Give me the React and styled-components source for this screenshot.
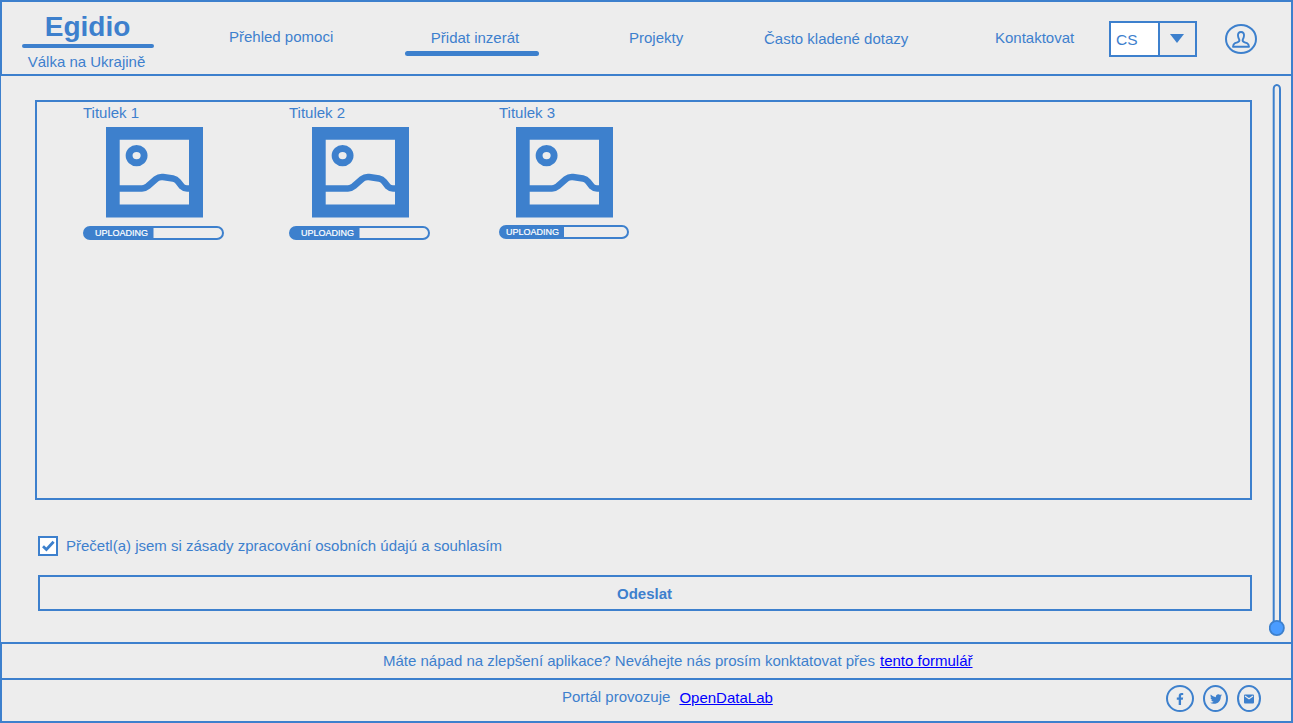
import React from "react";
import styled, { createGlobalStyle } from "styled-components";
import { FaFacebookF, FaTwitter } from "react-icons/fa";

const blue = "#3d80cd";

const Global = createGlobalStyle`
  *, *::before, *::after { box-sizing: border-box; }
  body {
    margin: 0;
    background: #ededed;
    color: ${blue};
    font: 15px/17px "Liberation Sans", Arial, sans-serif;
    overflow: hidden;
  }
`;

const Page = styled.div`
  display: flex;
  flex-direction: column;
  width: 1293px;
  height: 723px;
`;

const Header = styled.header`
  display: flex;
  align-items: flex-start;
  height: 76px;
  border: 2px solid ${blue};
`;

const Brand = styled.div`
  display: flex;
  flex-direction: column;
  align-items: center;
  width: 132px;
  margin: 8px 75px 0 20px;
  white-space: nowrap;
`;

const BrandName = styled.h1`
  margin: 0 1px 0 0;
  font-size: 28px;
  line-height: 34px;
`;

const Rule = styled.span`
  display: block;
  width: 100%;
  height: ${(p) => p.$thickness}px;
  border-radius: 3px;
  background: ${blue};
`;

const Tagline = styled.span`
  margin: 5px 3px 0 0;
`;

const Nav = styled.nav`
  display: grid;
  grid-template-columns: 176px 224px 135px 231px 114px;
  align-items: start;
  padding-top: 26px;
  white-space: nowrap;
`;

const NavItem = styled.a`
  padding-top: ${(p) => p.$drop || 0}px;
`;

const ActiveItem = styled(NavItem)`
  display: flex;
  flex-direction: column;
  align-items: center;
  gap: 5px;
  width: 134px;
  span:first-child { margin-left: 6px; }
`;

const LanguageSelect = styled.div`
  display: flex;
  width: 88px;
  height: 36px;
  margin-top: 19px;
  border: 2px solid ${blue};
`;

const LanguageValue = styled.span`
  width: 49px;
  padding: 8px 0 0 5px;
  border-right: 2px solid ${blue};
  background: #fff;
  font-size: 15.5px;
`;

const LanguageArrow = styled.span`
  display: flex;
  flex: 1;
  justify-content: center;
  padding: 11px 1px 0 0;
`;

const Avatar = styled.svg`
  width: 32px;
  height: 30px;
  margin: 22px 0 0 28px;
`;

const Main = styled.main`
  display: flex;
  height: 566px;
  border: solid ${blue};
  border-width: 0 2px 0 1px;
`;

const Content = styled.div`
  display: flex;
  flex-direction: column;
  width: 1217px;
  margin: 24px 17px 0 34px;
`;

const Gallery = styled.section`
  display: flex;
  height: 400px;
  padding: 2px 0 0 46px;
  border: 2px solid ${blue};
`;

const Upload = styled.article`
  display: flex;
  flex-direction: column;
  width: ${(p) => p.$column}px;
`;

const Picture = styled.svg`
  width: 97px;
  height: 91px;
  margin: 6px 0 0 ${(p) => p.$indent}px;
`;

const Progress = styled.div`
  width: ${(p) => p.$length}px;
  height: 14px;
  margin-top: ${(p) => p.$gap}px;
  padding-left: ${(p) => p.$inset}px;
  border: 2px solid ${blue};
  border-radius: 7px;
  background: linear-gradient(${blue}, ${blue}) border-box left / ${(p) => p.$fill}px 100% no-repeat;
  color: #fff;
  font-size: 9px;
  line-height: 10px;
  -webkit-text-stroke: 0.2px #fff;
`;

const Consent = styled.label`
  display: flex;
  align-items: flex-start;
  gap: 8px;
  height: 20px;
  margin: 36px 0 0 3px;
`;

const ConsentText = styled.span`
  padding-top: 1px;
`;

const Checkbox = styled.span`
  display: flex;
  width: 20px;
  height: 20px;
  border: 2px solid ${blue};
  background: #fff;
`;

const Submit = styled.button`
  width: 1214px;
  height: 36px;
  margin: 19px 0 0 3px;
  padding: 1px 1px 0 0;
  border: 2px solid ${blue};
  background: transparent;
  color: inherit;
  font: inherit;
  font-weight: bold;
`;

const Slider = styled.svg`
  width: 16px;
  height: 554px;
  margin-top: 7px;
`;

const Feedback = styled.div`
  display: flex;
  gap: 5px;
  height: 36px;
  padding: 8px 0 0 381px;
  border: solid ${blue};
  border-width: 2px 2px 0;
  white-space: nowrap;
`;

const Link = styled.a`
  color: #0000ff;
  text-decoration: underline;
`;

const Footer = styled.footer`
  display: flex;
  height: 45px;
  padding-left: 560px;
  border: 2px solid ${blue};
  white-space: nowrap;
`;

const Operator = styled.div`
  display: flex;
  gap: 9px;
  width: 604px;
  padding-top: 8px;
  ${Link} { padding-top: 1px; }
`;

const Socials = styled.div`
  display: flex;
  gap: 9px;
  padding-top: 5px;
`;

const Social = styled.a`
  display: flex;
  align-items: center;
  justify-content: center;
  width: ${(p) => p.$w}px;
  height: 27px;
  border: 2px solid ${blue};
  border-radius: 50%;
  color: ${blue};
`;

const uploads = [
  { title: "Titulek 1", column: 206, indent: 23, length: 141, fill: 70.5, inset: 10, gap: 8 },
  { title: "Titulek 2", column: 210, indent: 23, length: 141, fill: 70.5, inset: 10, gap: 8 },
  { title: "Titulek 3", column: 130, indent: 17, length: 130, fill: 65, inset: 5, gap: 7 },
];

function PictureIcon({ indent }) {
  return (
    <Picture $indent={indent} viewBox="0 0 97 91" fill="none" stroke={blue}>
      <path fill={blue} stroke="none" fillRule="evenodd" d="M0 0H97V90.6H0ZM13.7 12.7V77.5H83V12.7Z" />
      <ellipse cx="30.6" cy="28.6" rx="7.5" ry="7.1" strokeWidth="6.9" />
      <path strokeWidth="6.5" d="M13 61.5H36Q39 61.5 42 59L50 52Q53 49.6 57 50L67 51.5Q70 52 72 54.5L76 59.5Q78 61.5 81 61.5H84" />
    </Picture>
  );
}

export default function App() {
  return (
    <Page>
      <Global />
      <Header>
        <Brand>
          <BrandName>Egidio</BrandName>
          <Rule $thickness={4} />
          <Tagline>Válka na Ukrajině</Tagline>
        </Brand>
        <Nav>
          <NavItem>Přehled pomoci</NavItem>
          <ActiveItem $drop={1}>
            <span>Přidat inzerát</span>
            <Rule $thickness={5} />
          </ActiveItem>
          <NavItem $drop={1}>Projekty</NavItem>
          <NavItem $drop={2}>Často kladené dotazy</NavItem>
          <NavItem $drop={1}>Kontaktovat</NavItem>
        </Nav>
        <LanguageSelect>
          <LanguageValue>CS</LanguageValue>
          <LanguageArrow>
            <svg width="14" height="9" viewBox="0 0 14 9"><path fill={blue} d="M0 0H14L7 9Z" /></svg>
          </LanguageArrow>
        </LanguageSelect>
        <Avatar viewBox="0 0 32 30" fill="none" stroke={blue}>
          <ellipse cx="16" cy="15" rx="15" ry="14" strokeWidth="2" />
          <path strokeWidth="1.9" strokeLinejoin="round" d="M16 8C13.7 8 12.8 9.6 13 11.8C13.1 13.6 13.8 14.8 14.3 15.7C14.7 17.1 13.9 17.8 12.4 18.3L10 19.1C8.6 19.7 8.1 21 8 22.8H24C23.9 21 23.4 19.7 22 19.1L19.6 18.3C18.1 17.8 17.3 17.1 17.7 15.7C18.2 14.8 18.9 13.6 19 11.8C19.2 9.6 18.3 8 16 8Z" />
        </Avatar>
      </Header>
      <Main>
        <Content>
          <Gallery>
            {uploads.map((u) => (
              <Upload key={u.title} $column={u.column}>
                <span>{u.title}</span>
                <PictureIcon indent={u.indent} />
                <Progress $length={u.length} $gap={u.gap} $fill={u.fill} $inset={u.inset}>
                  UPLOADING
                </Progress>
              </Upload>
            ))}
          </Gallery>
          <Consent>
            <Checkbox>
              <svg width="16" height="16" viewBox="0 0 16 16" fill="none" stroke={blue} strokeWidth="2.8">
                <path d="M3 8.3L6.4 11.5L13.6 3.8" />
              </svg>
            </Checkbox>
            <ConsentText>Přečetl(a) jsem si zásady zpracování osobních údajú a souhlasím</ConsentText>
          </Consent>
          <Submit>Odeslat</Submit>
        </Content>
        <Slider viewBox="0 0 16 554" stroke={blue} fill="none">
          <rect x="4.7" y="2" width="6.3" height="545" rx="3.1" ry="4" strokeWidth="2" />
          <circle cx="7.8" cy="545" r="7.1" fill="#4a9cff" strokeWidth="1.8" />
        </Slider>
      </Main>
      <Feedback>
        <span>Máte nápad na zlepšení aplikace? Neváhejte nás prosím konktatovat přes</span>
        <Link>tento formulář</Link>
      </Feedback>
      <Footer>
        <Operator>
          <span>Portál provozuje</span>
          <Link>OpenDataLab</Link>
        </Operator>
        <Socials>
          <Social $w={28}><FaFacebookF size={12} /></Social>
          <Social $w={25}><FaTwitter size={12} /></Social>
          <Social $w={24}>
            <svg width="10" height="10" viewBox="0 0 10 10">
              <rect y="0.5" width="10" height="9" rx="1" fill={blue} />
              <path d="M1 2L5 4.8L9 2" fill="none" stroke="#ededed" strokeWidth="1.1" />
            </svg>
          </Social>
        </Socials>
      </Footer>
    </Page>
  );
}
